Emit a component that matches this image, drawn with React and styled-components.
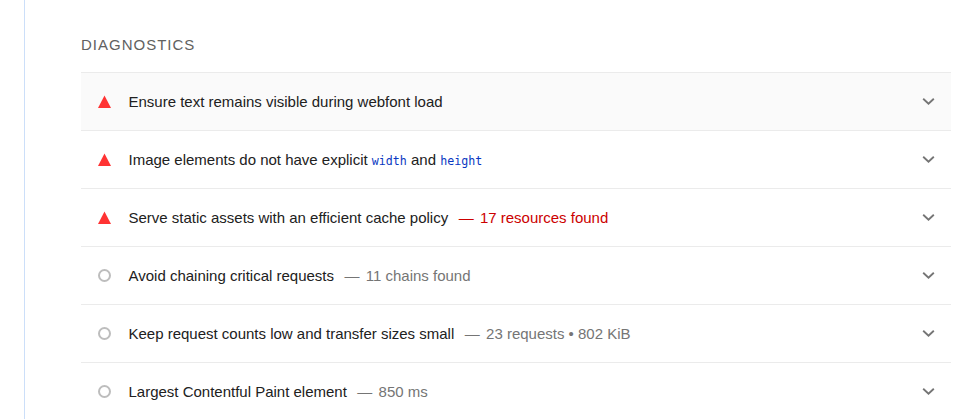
import React from "react";
import styled, { createGlobalStyle } from "styled-components";

const GlobalStyle = createGlobalStyle`
  * { box-sizing: border-box; }
  body { margin: 0; background: #fff; overflow: hidden; }
`;

const Page = styled.main`
  height: 419px;
  margin-left: 24px;
  padding: 36px 10px 0 56px;
  border-left: 1px solid #ccdff9;
  overflow: hidden;
  font-family: "Liberation Sans", Arial, sans-serif;
  color: #212121;
`;

const Heading = styled.h2`
  height: 36px;
  margin: 0;
  font-size: 15px;
  line-height: 18px;
  font-weight: 400;
  letter-spacing: 1px;
  color: #616161;
`;

const AuditList = styled.div`
  display: flex;
  flex-direction: column;
`;

const AuditRow = styled.div`
  display: flex;
  align-items: center;
  height: 58px;
  padding: 0 16px 0 17px;
  border-top: 1px solid #ebebeb;
  background: ${(p) => (p.$hovered ? "#fafafa" : "#fff")};
`;

const Marker = styled.svg`
  flex: none;
  width: 13px;
  height: 13px;
  margin-right: 17.5px;
`;

const Title = styled.span`
  height: 20px;
  font-size: 15px;
  line-height: 20px;
  letter-spacing: -0.005px;
  white-space: nowrap;
`;

const Code = styled.code`
  font-family: "DejaVu Sans Mono", monospace;
  font-size: 11.65px;
  line-height: 1;
  color: #0938c2;
`;

const Detail = styled.span`
  margin-left: 10.5px;
  color: ${(p) => (p.$fail ? "#c00" : "#757575")};
`;

const Dash = styled.span`
  margin-right: 6.3px;
`;

const Chevron = styled.svg`
  flex: none;
  width: 13px;
  height: 9px;
  margin-left: auto;
`;

const audits = [
  { fail: true, hovered: true, title: "Ensure text remains visible during webfont load" },
  { fail: true, title: <>Image elements do not have explicit <Code>width</Code> and <Code>height</Code></> },
  { fail: true, title: "Serve static assets with an efficient cache policy", detail: "17 resources found" },
  { title: "Avoid chaining critical requests", detail: "11 chains found" },
  { title: "Keep request counts low and transfer sizes small", detail: "23 requests • 802 KiB" },
  { title: "Largest Contentful Paint element", detail: "850 ms" },
];

export default function App() {
  return (
    <>
      <GlobalStyle />
      <Page>
        <Heading>DIAGNOSTICS</Heading>
        <AuditList>
          {audits.map(({ fail, hovered, title, detail }, i) => (
            <AuditRow key={i} $hovered={hovered}>
              <Marker viewBox="0 0 13 13">
                {fail ? (
                  <path d="M6.5 0.6 13 13H0Z" fill="#f33" />
                ) : (
                  <circle cx="6.5" cy="6.5" r="5.5" fill="none" stroke="#bdbdbd" strokeWidth="2" />
                )}
              </Marker>
              <Title>
                {title}
                {detail && <Detail $fail={fail}><Dash>—</Dash>{detail}</Detail>}
              </Title>
              <Chevron viewBox="0 0 13 9">
                <path d="M1.2 1.8 6.5 6.6 11.8 1.8" fill="none" stroke="#757575" strokeWidth="1.9" />
              </Chevron>
            </AuditRow>
          ))}
        </AuditList>
      </Page>
    </>
  );
}
